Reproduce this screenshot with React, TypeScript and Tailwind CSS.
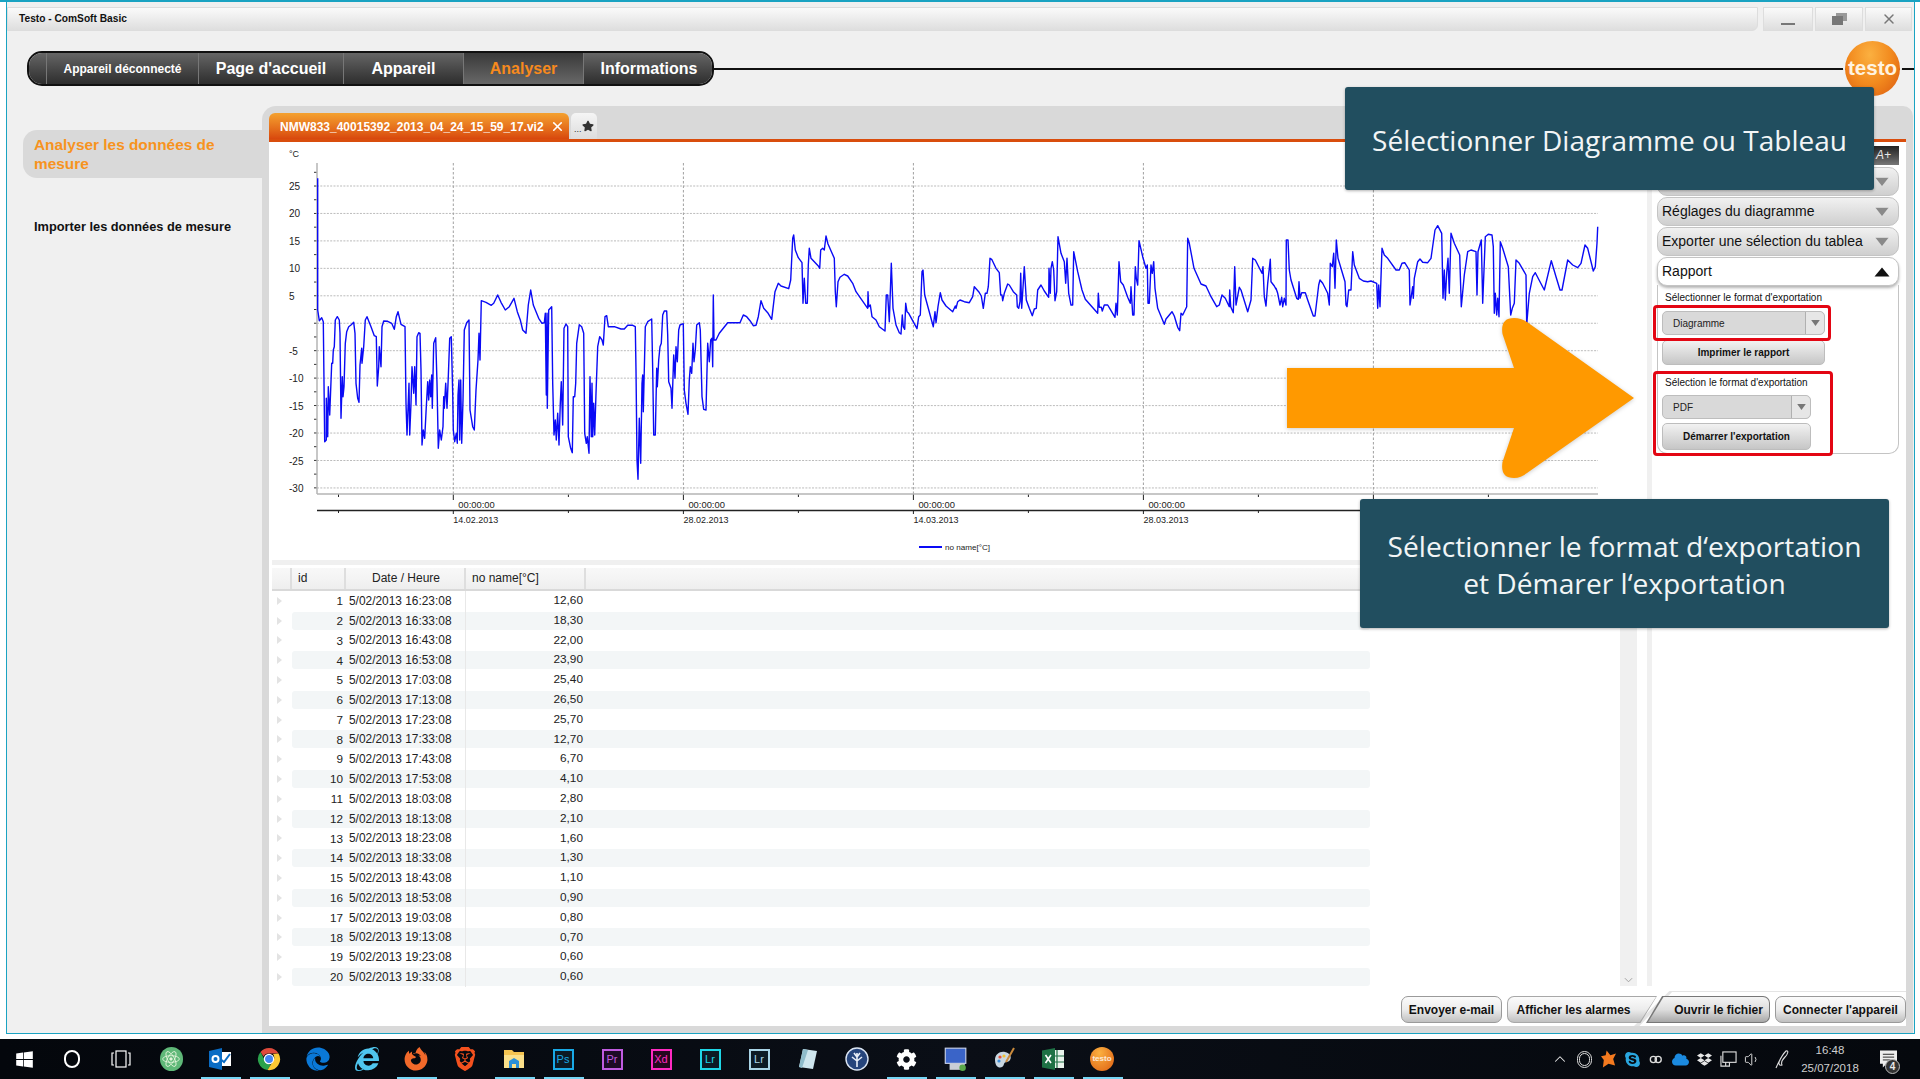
import { ChevronUp, Volume1, X } from "lucide-react";
import { FaWindows, FaEdge, FaInternetExplorer, FaFirefoxBrowser, FaCog, FaSkype, FaDropbox, FaCloud, FaStar } from "react-icons/fa";
import { SiBrave } from "react-icons/si";

// traced from the reference, 3x coordinates relative to each crop
const seg = (ox: number, oy: number, s: string) =>
  s
    .trim()
    .split(/\s+/)
    .map((p) => {
      const [x, y] = p.split(",").map(Number);
      return `${(ox + x / 3).toFixed(1)},${(oy + y / 3).toFixed(1)}`;
    })
    .join(" ");

const trace = [
  seg(316, 170, "5,25 5,420 10,452 17,443 22,455 26,815 31,810 31,685 35,800 37,650 41,735 47,580 50,580 52,540 55,530 58,450 64,440 70,450 72,490 75,745 79,620 81,680 84,650 88,520 92,485 98,470 105,465 113,457 117,490 120,640 125,685 129,697 132,585 137,535 138,580 143,530 148,450 153,440 165,470 175,497 181,500 184,648 188,590 190,530 195,590 198,470 203,453 215,454 227,460 235,478 241,440 246,425 255,463 267,470 270,700 273,795 279,640 281,795 285,700 288,590 293,670 296,590 300,705 303,500 308,488 312,490 315,600 318,825 322,780 326,805 331,710 335,635 338,690 341,630 344,680 347,615 349,715 353,520 359,503 363,640 367,835 371,780 376,810 381,770 383,680 385,715 389,640 393,715 397,620 401,505 406,500 410,670 412,780 416,815 421,790 424,820 426,675 429,630 431,810 434,630 437,820 441,690 445,480 452,458 459,450 462,720 470,770 475,780 480,660 486,570 489,490 492,570 496,392 510,397 526,406 533,400 545,375 555,397 568,420 580,410 594,385 604,425 613,450 620,480 630,490 637,405 644,360 652,405 668,445 678,460 685,458 688,430 691,675 693,430 694,715 698,420 707,410 710,640 714,795 718,750 721,810 725,730 729,825 733,700 736,635 740,765 744,475 750,462 755,470 757,800 764,835 769,848 772,680 776,680 779,640 782,520 790,464 797,470 803,490 806,790 811,820 814,800 819,850 822,620 826,800 828,640 830,800 833,700 836,795 840,670 845,530 851,500 858,510 862,525 867,440 872,437 877,470 895,470 915,477 925,477 935,466 950,466 958,470"),
  seg(636, 170, "0,600 3,870 6,928 10,745 14,880 18,640 20,615 22,725 25,600 28,470 35,455 47,447 50,600 53,795 58,795 62,595 64,650 68,570 72,530 76,520 80,435 85,423 92,423 95,495 98,635 105,655 108,715 113,555 117,625 120,530 124,575 128,480 132,465 142,461 145,660 150,700 156,733 160,630 163,590 167,610 171,520 174,575 178,540 182,465 190,458 193,480 198,680 203,718 210,720 215,520 220,575 224,510 228,505 230,590 232,375 234,510 240,510 250,490 262,475 275,458 312,458 322,435 332,440 342,452 352,467 360,466 367,440 375,392 383,415 395,428 407,448 417,365 427,340 435,348 458,356 464,330 470,205 473,195 478,240 487,263 498,278 501,400 505,325 509,400 514,400 517,285 520,235 525,265 547,288 551,295 554,240 560,235 565,240 570,198 576,222 595,265 598,365 601,410 606,335 612,322 625,313 635,318 650,340 660,365 695,415 696,365 698,410 703,405 708,440 720,450 730,470 747,483 751,375 755,375 760,455 766,280 771,415 780,465 790,488 795,492 799,435 802,470 806,478 809,400 813,425 818,430 843,476 848,440 853,435 858,305 861,300 866,375 892,470 897,425 900,458 906,410 913,368 918,390 930,408 950,425 958,408"),
  seg(956, 210, "0,295 5,275 12,270 25,275 40,278 50,260 55,230 68,245 76,258 82,295 88,250 93,250 97,230 102,145 107,148 120,175 130,188 134,255 138,255 140,272 145,250 155,222 160,225 172,245 182,255 184,290 188,295 192,275 194,190 197,295 205,170 211,270 220,295 229,317 235,297 241,295 245,240 255,225 265,243 278,262 279,175 283,250 285,175 289,155 293,180 297,272 302,245 306,80 315,130 325,155 329,220 333,145 338,250 345,285 350,285 353,125 365,185 378,240 388,268 425,310 427,250 430,292 436,292 439,303 445,285 455,285 463,298 477,322 480,280 484,315 489,155 494,215 502,225 515,262 523,280 525,230 530,315 534,315 538,170 541,205 545,225 549,92 560,140 570,175 574,165 576,280 580,280 585,165 589,190 593,155 597,235 605,295 625,343 630,327 648,305 655,318 665,352 671,362 675,310 680,315 685,305 692,290 695,85 700,100 714,175 735,222 750,228 765,260 782,290 790,285 798,255 808,265 820,290 821,240 824,290 832,308 836,170 840,285 850,232 855,240 875,305 885,270 890,145 898,150 918,190 921,170 925,260 930,288 935,220 943,148 945,215 955,228 960,238"),
  seg(1276, 210, "0,235 5,250 12,285 17,262 20,290 25,265 30,285 31,90 36,90 40,180 45,210 62,265 67,268 69,215 72,265 77,248 88,248 95,270 112,318 117,318 128,225 132,210 140,220 155,250 160,285 163,160 169,170 173,130 177,235 181,90 186,145 207,215 210,285 213,290 218,240 225,240 230,125 235,165 250,205 262,213 275,215 285,213 302,220 305,295 308,225 312,290 318,115 325,135 335,145 360,180 370,180 378,160 386,158 400,180 402,285 410,230 412,265 415,205 425,155 432,147 440,157 455,158 465,145 477,60 485,47 497,70 501,265 505,180 508,270 512,190 516,145 520,250 525,70 535,100 551,135 556,290 565,195 575,125 585,120 600,125 603,255 606,125 616,90 620,280 628,80 637,73 648,75 652,110 655,310 658,250 662,315 665,265 669,320 673,95 680,115 697,170 704,315 709,295 715,280 720,150 730,160 750,195 752,345 760,250 770,200 778,188 805,240 826,152 840,200 852,240 858,240 875,150 890,165 905,173 915,160 927,105 935,115 952,183 958,170 963,100 965,50"),
].join(" ");

const yTicks = [25, 20, 15, 10, 5, 0, -5, -10, -15, -20, -25, -30];
const yPos = (i: number) => 186 + i * 27.45;
const majors = [
  { x: 453.3, d: "14.02.2013" },
  { x: 683.4, d: "28.02.2013" },
  { x: 913.4, d: "14.03.2013" },
  { x: 1143.4, d: "28.03.2013" },
  { x: 1373.4, d: "" },
];
const minors = [338.5, 568.4, 798.4, 1028.4, 1258.4, 1488.4];

function Chart() {
  return (
    <svg viewBox="269 142 1378 418" className="block w-[1378px] h-[418px] shrink-0" fontFamily="'Liberation Sans', Arial, sans-serif">
      {yTicks.map((t, i) => (
        <g key={t}>
          <line x1="317" x2="1598" y1={yPos(i)} y2={yPos(i)} stroke="#bbbbbb" strokeWidth="1" strokeDasharray="2 1.3" />
          {t !== 0 && (
            <text x="289" y={yPos(i) + 4} fontSize="10" fill="#222">
              {t}
            </text>
          )}
        </g>
      ))}
      {Array.from({ length: 24 }).map((_, i) => (
        <line key={i} x1="314" x2="317" y1={172.3 + i * 13.72} y2={172.3 + i * 13.72} stroke="#333" strokeWidth="1" />
      ))}
      <text x="289" y="157" fontSize="9" fill="#222">
        °C
      </text>
      {majors.map((m) => (
        <g key={m.x}>
          <line x1={m.x} x2={m.x} y1="163" y2="494" stroke="#a0a0a0" strokeWidth="1" strokeDasharray="2.5 2" />
          <line x1={m.x} x2={m.x} y1="494" y2="500" stroke="#222" strokeWidth="1" />
          <line x1={m.x} x2={m.x} y1="510" y2="514" stroke="#222" strokeWidth="1" />
          <text x={m.x + 5} y="508" fontSize="9.4" fill="#222">
            00:00:00
          </text>
          <text x={m.x} y="523" fontSize="9" fill="#222">
            {m.d}
          </text>
        </g>
      ))}
      {minors.map((x) => (
        <g key={x}>
          <line x1={x} x2={x} y1="494" y2="497" stroke="#222" strokeWidth="1" />
          <line x1={x} x2={x} y1="510" y2="513" stroke="#222" strokeWidth="1" />
        </g>
      ))}
      <line x1="317" x2="317" y1="163" y2="494" stroke="#b4b4b4" strokeWidth="1.5" />
      <line x1="317" x2="1598" y1="494" y2="494" stroke="#b4b4b4" strokeWidth="1.5" />
      <line x1="317" x2="1598" y1="510.5" y2="510.5" stroke="#222" strokeWidth="1.6" />
      <polyline points={trace} fill="none" stroke="#0a0af5" strokeWidth="1.4" strokeLinejoin="round" />
      <line x1="919" x2="942" y1="547" y2="547" stroke="#0a0af5" strokeWidth="2" />
      <text x="945" y="550" fontSize="8.1" fill="#222">
        no name[°C]
      </text>
    </svg>
  );
}

const values = ["12,60", "18,30", "22,00", "23,90", "25,40", "26,50", "25,70", "12,70", "6,70", "4,10", "2,80", "2,10", "1,60", "1,30", "1,10", "0,90", "0,80", "0,70", "0,60", "0,60"];
const times = ["16:23:08", "16:33:08", "16:43:08", "16:53:08", "17:03:08", "17:13:08", "17:23:08", "17:33:08", "17:43:08", "17:53:08", "18:03:08", "18:13:08", "18:23:08", "18:33:08", "18:43:08", "18:53:08", "19:03:08", "19:13:08", "19:23:08", "19:33:08"];

function DataTable() {
  return (
    <div className="flex-1 pt-[3px] min-w-0">
      <div className="flex h-[23px] border-b-2 border-[#d9d9d9] bg-linear-to-b from-[#f8f8f8] via-[#f4f4f4] to-[#eeeeee] ml-[3px] text-[12px] text-[#222] leading-[21px]">
        <div className="w-[20px] border-r-2 border-[#dedede]" />
        <div className="w-[54px] pl-[6px] border-r-2 border-[#dedede]">id</div>
        <div className="w-[120px] pl-[2px] text-center border-r-2 border-[#dedede]">Date / Heure</div>
        <div className="w-[120px] pl-[6px] border-r-2 border-[#dedede]">no name[°C]</div>
      </div>
      {values.map((v, i) => (
        <div key={i} className="flex items-center h-[19.8px]">
          <div className="w-[23px] flex justify-center pr-[3px]">
            <div className="w-0 h-0 border-y-[4px] border-y-transparent border-l-[5px] border-l-[#e3e3e3]" />
          </div>
          <div className={`flex items-center w-[1078px] h-[18px] rounded-[3px] ${i % 2 === 1 ? "bg-[#f3f6f7]" : ""}`}>
            <div className="w-[51px] text-right text-[11.7px] text-[#222]">{i + 1}</div>
            <div className="w-[123px] pl-[6px] text-[11.9px] text-[#222] h-[20px] leading-[20px] border-r border-[#e8e8e8] whitespace-nowrap">5/02/2013 {times[i]}</div>
            <div className="w-[117px] text-right text-[11.8px] text-[#222]">{v}</div>
          </div>
        </div>
      ))}
    </div>
  );
}

function Tri({ up }: { up?: boolean }) {
  return (
    <svg viewBox="0 0 16 10" className="w-[16px] h-[10px]">
      {up ? <path d="M8 0.5 15.5 9.5 H0.5Z" fill="#111" /> : <path d="M1 0.5 H15 L8 9.5Z" fill="#8a8a8a" stroke="#fff" strokeWidth="0.4" />}
    </svg>
  );
}

function Accordion({ label, open }: { label: string; open?: boolean }) {
  return (
    <div
      className={`flex items-center justify-between h-[29px] pl-[4px] pr-[8px] rounded-[10px] border border-[#c4c4c4] text-[14px] text-[#111] whitespace-nowrap ${
        open ? "bg-white shadow-[0_2px_3px_rgba(0,0,0,0.3)]" : "bg-linear-to-b from-[#f1f1f1] to-[#cfcfcf]"
      }`}
    >
      <span>{label}</span>
      <Tri up={open} />
    </div>
  );
}

function Combo({ label, w }: { label: string; w: string }) {
  return (
    <div className={`flex items-center h-[24px] rounded-[5px] border border-[#bdbdbd] bg-[#d9d9d9] ${w}`}>
      <span className="flex-1 pl-[10px] text-[10px] text-[#222]">{label}</span>
      <span className="w-[19px] h-full flex items-center justify-center border-l border-[#b0b0b0] bg-[#e6e6e6] rounded-r-[5px]">
        <svg viewBox="0 0 10 7" className="w-[9px] h-[6px]">
          <path d="M0 0H10L5 7Z" fill="#777" />
        </svg>
      </span>
    </div>
  );
}

function ReportPanel() {
  return (
    <div className="h-[169px] -mt-[1px] pl-[4px] border border-t-0 border-[#c4c4c4] rounded-b-[10px] text-[#111]">
      <div className="pl-[3px] pt-[5px] h-[26px] text-[10px] leading-[16px]">Sélectionner le format d'exportation</div>
      <Combo label="Diagramme" w="w-[163px]" />
      <button className="block w-[163px] h-[25px] mt-[5px] rounded-[5px] border border-[#bdbdbd] bg-linear-to-b from-[#f2f2f2] to-[#c6c6c6] text-[10px] font-bold">Imprimer le rapport</button>
      <div className="pl-[3px] pt-[10px] h-[30px] text-[10px] leading-[16px]">Sélection le format d'exportation</div>
      <Combo label="PDF" w="w-[149px]" />
      <button className="block w-[149px] h-[27px] mt-[4px] rounded-[5px] border border-[#bdbdbd] bg-linear-to-b from-[#f2f2f2] to-[#c6c6c6] text-[10px] font-bold">Démarrer l'exportation</button>
    </div>
  );
}

const btn = "h-[27px] flex items-center justify-center text-[12px] font-bold text-[#111] whitespace-nowrap";
const btnSkin = "rounded-[7px] border border-[#9a9a9a] bg-linear-to-b from-[#fbfbfb] via-[#ececec] to-[#c0c0c0]";

function BottomButtons() {
  return (
    <div className="relative flex justify-end items-start pt-[10px] h-[40px]">
      <div className="absolute right-0 bottom-0 w-[272px] h-[35px] bg-[#e4e4e4] [clip-path:polygon(0_100%,13%_0,100%_0,100%_3%,14%_3%,2%_100%)]" />
      <div className={`${btn} ${btnSkin} w-[101px] mr-[5px]`}>Envoyer e-mail</div>
      <div className="relative w-[150px] h-[27px] p-[1px] -mr-[11px] rounded-l-[7px] bg-[#a8a8a8] [clip-path:polygon(0_0,100%_0,89%_100%,0_100%)]">
        <div className={`${btn} h-full pr-[17px] rounded-l-[6px] bg-linear-to-b from-[#fbfbfb] via-[#ececec] to-[#c0c0c0] [clip-path:polygon(0_0,100%_0,89%_100%,0_100%)]`}>Afficher les alarmes</div>
      </div>
      <div className="relative w-[124px] h-[27px] p-[1px] mr-[5px] rounded-r-[7px] bg-[#777777] [clip-path:polygon(13%_0,100%_0,100%_100%,0_100%)]">
        <div className={`${btn} h-full pl-[21px] rounded-r-[6px] bg-linear-to-b from-[#f4f4f4] via-[#dedede] to-[#a8a8a8] [clip-path:polygon(13.5%_0,100%_0,100%_100%,1%_100%)]`}>Ouvrir le fichier</div>
      </div>
      <div className={`${btn} ${btnSkin} w-[131px]`}>Connecter l'appareil</div>
    </div>
  );
}

function Underlined({ active, children }: { active?: boolean; children: React.ReactNode }) {
  return (
    <div className="relative w-[49px] h-[40px] flex items-center justify-center">
      {children}
      {active && <div className="absolute bottom-0 left-[5px] w-[40px] h-[2px] bg-[#76d6f5]" />}
    </div>
  );
}

function Adobe({ t, c }: { t: string; c: string }) {
  return <div className={`w-[21px] h-[21px] border-2 bg-[#0c1a24] flex items-center justify-center text-[11px] leading-none ${c}`}>{t}</div>;
}

function Taskbar() {
  return (
    <div className="flex items-center h-[40px] bg-linear-to-r from-[#04070c] via-[#0a0e16] to-[#05080d] text-white font-['Liberation_Sans',Arial,sans-serif]">
      <div className="w-[48px] flex justify-center">
        <FaWindows size={19} />
      </div>
      <div className="w-[48px] flex justify-center">
        <div className="w-[16px] h-[18px] rounded-full border-2 border-white" />
      </div>
      <div className="w-[50.5px] flex justify-center">
        <svg viewBox="0 0 20 18" className="w-[20px] h-[18px]" fill="none" stroke="#fff" strokeWidth="1.2">
          <rect x="5" y="1" width="10" height="16" />
          <path d="M3 3H1V15H3M17 3H19V15H17" />
        </svg>
      </div>
      <Underlined>
        <div className="w-[23px] h-[24px] rounded-full bg-[#5fb878] flex items-center justify-center">
          <svg viewBox="0 0 24 24" className="w-[20px] h-[20px]" fill="none" stroke="#e5f5dc" strokeWidth="1">
            <ellipse cx="12" cy="12" rx="10" ry="4" />
            <ellipse cx="12" cy="12" rx="10" ry="4" transform="rotate(60 12 12)" />
            <ellipse cx="12" cy="12" rx="10" ry="4" transform="rotate(120 12 12)" />
            <circle cx="12" cy="12" r="1.5" fill="#e5f5dc" />
          </svg>
        </div>
      </Underlined>
      <Underlined active>
        <svg viewBox="0 0 24 24" className="w-[24px] h-[24px]">
          <rect x="9" y="5" width="14" height="14" fill="#fff" />
          <path d="M11 11 L16 15 L22 7" fill="none" stroke="#0a6cc4" strokeWidth="2" />
          <path d="M1 4 L14 1 V23 L1 20Z" fill="#0a6cc4" />
          <circle cx="7.5" cy="12" r="3" fill="none" stroke="#fff" strokeWidth="2" />
        </svg>
      </Underlined>
      <Underlined active>
        <svg viewBox="0 0 24 24" className="w-[24px] h-[24px]">
          <path d="M12 1 A11 11 0 0 1 21.5 6.5 H12 A5.5 5.5 0 0 0 6.5 9.5 L3.5 5 A11 11 0 0 1 12 1Z" fill="#de4a3c" />
          <path d="M3.5 5 L8.5 14.5 A6 6 0 0 0 14 17.5 L10.5 23 A11 11 0 0 1 3.5 5Z" fill="#2ba24c" />
          <path d="M21.5 6.5 A11 11 0 0 1 10.5 23 L15.5 15 A6 6 0 0 0 16 7Z" fill="#fcc934" />
          <circle cx="12" cy="12" r="4.6" fill="#4285f4" stroke="#fff" strokeWidth="1.2" />
        </svg>
      </Underlined>
      <Underlined>
        <FaEdge size={24} className="text-[#0a78d7]" />
      </Underlined>
      <Underlined>
        <FaInternetExplorer size={24} className="text-[#4fc6ef]" />
      </Underlined>
      <Underlined active>
        <FaFirefoxBrowser size={24} className="text-[#f2692a]" />
      </Underlined>
      <Underlined>
        <SiBrave size={24} className="text-[#f4511e]" />
      </Underlined>
      <Underlined active>
        <svg viewBox="0 0 24 24" className="w-[24px] h-[24px]">
          <path d="M2 3H10L12 5H22V21H2Z" fill="#f5c451" />
          <rect x="2" y="8" width="20" height="13" fill="#fbe08a" />
          <path d="M7 21V14L12 11L17 14V21H14V17H10V21Z" fill="#2b8fd8" />
        </svg>
      </Underlined>
      <Underlined active>
        <Adobe t="Ps" c="border-[#19a9e6] text-[#19a9e6]" />
      </Underlined>
      <Underlined>
        <Adobe t="Pr" c="border-[#c05ce0] text-[#c05ce0] bg-[#1d0b26]" />
      </Underlined>
      <Underlined>
        <Adobe t="Xd" c="border-[#ff2bc2] text-[#ff2bc2] bg-[#26071f]" />
      </Underlined>
      <Underlined>
        <Adobe t="Lr" c="border-[#1fd6e6] text-[#1fd6e6]" />
      </Underlined>
      <Underlined>
        <Adobe t="Lr" c="border-[#a9d4e6] text-[#a9d4e6]" />
      </Underlined>
      <Underlined>
        <svg viewBox="0 0 24 24" className="w-[24px] h-[24px]">
          <path d="M7 2 L21 4 L17 22 L3 20Z" fill="#cfe6ee" />
          <path d="M7 2 L12 3 L6 21 L3 20Z" fill="#8fbccb" />
        </svg>
      </Underlined>
      <Underlined>
        <svg viewBox="0 0 24 24" className="w-[24px] h-[24px]" fill="none">
          <circle cx="12" cy="12" r="11" fill="#26457c" stroke="#dbe5f3" strokeWidth="1.4" />
          <path d="M12 20V6M12 14L7 10M12 14L17 10M12 10L9 6M12 10L15 6" stroke="#e8eef8" strokeWidth="1.6" />
        </svg>
      </Underlined>
      <Underlined active>
        <FaCog size={21} />
      </Underlined>
      <Underlined active>
        <svg viewBox="0 0 24 24" className="w-[26px] h-[26px]">
          <rect x="3" y="2" width="19" height="14" fill="#3a64c8" stroke="#cfd8ee" strokeWidth="1" />
          <rect x="7" y="16" width="14" height="6" fill="#c9ced6" />
          <circle cx="19" cy="20" r="3" fill="#5aa84a" />
        </svg>
      </Underlined>
      <Underlined active>
        <svg viewBox="0 0 24 24" className="w-[24px] h-[24px]">
          <path d="M3 13C3 7 8 4 13 5C18 6 20 10 18 13C16 16 13 14 12 17C11 21 8 21 6 20C4 19 3 16 3 13Z" fill="#c9d7e2" />
          <circle cx="8" cy="10" r="1.6" fill="#e6523c" />
          <circle cx="12" cy="9" r="1.6" fill="#f2c230" />
          <circle cx="7" cy="14" r="1.6" fill="#3f8fd8" />
          <path d="M14 15 L22 1" stroke="#c98a3c" strokeWidth="2" />
        </svg>
      </Underlined>
      <Underlined active>
        <svg viewBox="0 0 24 24" className="w-[24px] h-[24px]">
          <rect x="10" y="3" width="13" height="18" fill="#e9f3ec" />
          <path d="M10 9H23M10 15H23M16 3V21" stroke="#1e7145" strokeWidth="1.2" />
          <path d="M1 3.5 L14 1 V23 L1 20.5Z" fill="#1e7145" />
          <path d="M4.5 8 L10 16M10 8 L4.5 16" stroke="#fff" strokeWidth="1.6" />
        </svg>
      </Underlined>
      <Underlined active>
        <div className="w-[24px] h-[24px] rounded-full bg-radial-[at_40%_25%] from-[#fbb040] to-[#dd5f12] flex items-center justify-center text-[8px] font-bold text-white/80">testo</div>
      </Underlined>
      <div className="flex-1" />
      <div className="flex items-center h-[40px] pr-[14px] text-[#e8e8e8]">
        {[
          <ChevronUp key="a" size={18} strokeWidth={1.4} />,
          <div key="b" className="w-[15px] h-[17px] rounded-full border-[3px] border-double border-[#ddd]" />,
          <svg key="c" viewBox="0 0 16 18" className="w-[15px] h-[18px]">
            <path d="M6 0 L10 5 L16 3 L13 9 L15 16 L8 14 L2 18 L3 10 L0 6 L5 5Z" fill="#f47a1f" />
          </svg>,
          <FaSkype key="d" size={17} className="text-[#2aa7e0]" />,
          <svg key="e" viewBox="0 0 16 12" className="w-[14px] h-[11px]" fill="none" stroke="#ddd" strokeWidth="1.5">
            <circle cx="5" cy="6" r="3.5" />
            <circle cx="10.5" cy="6" r="3.5" />
          </svg>,
          <FaCloud key="f" size={17} className="text-[#1b8ae0]" />,
          <FaDropbox key="g" size={15} />,
          <svg key="h" viewBox="0 0 18 18" className="w-[17px] h-[17px]" fill="none" stroke="#ddd" strokeWidth="1.2">
            <rect x="3" y="1" width="14" height="11" />
            <path d="M1 5V16H6M10 12V16H6V12" />
          </svg>,
          <Volume1 key="i" size={17} strokeWidth={1.3} />,
        ].map((ic, i) => (
          <div key={i} className="w-[24px] flex justify-center">
            {ic}
          </div>
        ))}
        <div className="w-[10px]" />
        <svg viewBox="0 0 16 20" className="w-[16px] h-[20px] mr-[-4px]" fill="none" stroke="#ddd" strokeWidth="1.1">
          <path d="M2 19 C5 12 9 5 12 2 C15 1 14 5 11 8 C8 11 7 14 8 16 C5 17 4 14 6 11" />
        </svg>
        <div className="w-[80px] ml-[4px] text-center text-[#cfcfcf]">
          <div className="text-[11.5px] leading-[18px]">16:48</div>
          <div className="text-[11.5px] leading-[18px]">25/07/2018</div>
        </div>
        <div className="relative w-[36px] flex justify-center">
          <svg viewBox="0 0 18 18" className="w-[17px] h-[18px]">
            <path d="M0 0H18V14H7L3 18V14H0Z" fill="#eee" />
            <path d="M3 4H15M3 7H15M3 10H11" stroke="#222" strokeWidth="1" />
          </svg>
          <div className="absolute left-[15px] top-[9px] w-[15px] h-[15px] rounded-full bg-[#333] border border-[#bbb] text-[10px] leading-[13px] font-bold text-center">4</div>
        </div>
      </div>
    </div>
  );
}

const navItem = "flex items-center justify-center h-full border-r border-[#777] bg-linear-to-b from-[#666666] to-[#2e2e2e] text-white font-bold";

export default function App() {
  return (
    <div className="relative flex flex-col w-[1920px] h-[1079px] overflow-hidden bg-white border-t-2 border-[#1aa3c2] font-['Liberation_Sans',Arial,sans-serif]">
      <div className="ml-[6px] w-[1909px] h-[1032px] border-x border-b border-[#1aa3c2] bg-[#f0f0f0] shrink-0">
        {/* title bar */}
        <div className="flex pt-[5px] h-[29px]">
          <div className="w-[1751px] h-[24px] flex items-center pl-[11px] rounded-br-[6px] border border-[#dddddd] bg-linear-to-b from-[#fafafa] to-[#dedede] text-[10.2px] font-bold text-[#111]">Testo - ComSoft Basic</div>
          <div className="ml-[5px] w-[50px] h-[24px] flex items-end justify-center pb-[5px] border border-[#dddddd] bg-linear-to-b from-[#fafafa] to-[#dedede]">
            <div className="w-[14px] h-[2px] bg-[#777]" />
          </div>
          <div className="ml-[2px] w-[48px] h-[24px] flex items-center justify-center border border-[#dddddd] bg-linear-to-b from-[#fafafa] to-[#dedede]">
            <svg viewBox="0 0 16 12" className="w-[16px] h-[12px]">
              <rect x="5" y="0" width="11" height="8" fill="#999" />
              <rect x="1" y="3" width="11" height="9" fill="#777" />
            </svg>
          </div>
          <div className="ml-[2px] w-[47px] h-[24px] flex items-center justify-center border border-[#dddddd] bg-linear-to-b from-[#fafafa] to-[#dedede]">
            <X size={16} strokeWidth={2.2} className="text-[#777]" />
          </div>
        </div>
        {/* nav */}
        <div className="flex items-center mt-[20px] h-[35px] pl-[20px]">
          <div className="flex h-[35px] w-[687px] shrink-0 overflow-hidden rounded-[15px] border-2 border-[#111]">
            <div className={`${navItem} w-[18px]`} />
            <div className={`${navItem} w-[152px] text-[12px]`}>Appareil déconnecté</div>
            <div className={`${navItem} w-[145px] text-[16px]`}>Page d'accueil</div>
            <div className={`${navItem} w-[120px] text-[16px]`}>Appareil</div>
            <div className="flex items-center justify-center h-full w-[120px] border-r border-[#777] bg-linear-to-b from-[#3a3a3a] to-[#686868] text-[16px] font-bold text-[#f78a1d]">Analyser</div>
            <div className={`${navItem} flex-1 pl-[2px] text-[16px] border-r-0`}>Informations</div>
          </div>
          <div className="flex-1 h-[2px] bg-[#111]" />
        </div>
        {/* body */}
        <div className="flex mt-[20px] h-[927px]">
          <div className="w-[255px] shrink-0 pt-[24px] pl-[16px] relative">
            <div className="h-[48px] pl-[11px] pt-[5px] rounded-l-[14px] bg-[#d9d9d9] text-[15.4px] leading-[19px] font-bold text-[#f7931e]">
              <div className="w-[220px]">Analyser les données de mesure</div>
            </div>
            <div className="mt-[40px] pl-[11px] text-[12.8px] leading-[18px] font-bold text-[#111] whitespace-nowrap">Importer les données de mesure</div>
          </div>
          <div className="w-[1651px] p-[7px] rounded-tl-[14px] rounded-tr-[10px] bg-[#d9d9d9] flex flex-col">
            <div className="flex h-[26px] shrink-0">
              <div className="flex items-center justify-between w-[300px] pl-[11px] pr-[4px] pt-[1px] rounded-t-[6px] bg-linear-to-b from-[#f4a12f] to-[#d8470d] text-[12px] font-bold text-white whitespace-nowrap">
                <span>NMW833_40015392_2013_04_24_15_59_17.vi2</span>
                <X size={15} strokeWidth={2.6} />
              </div>
              <div className="flex items-end ml-[2px] w-[26px] pb-[5px] pl-[3px] rounded-t-[5px] bg-linear-to-b from-[#f5f5f5] to-[#dddddd] text-[9px] text-[#333]">
                <span className="leading-none">...</span>
                <FaStar size={12} className="text-[#333] mb-[2px]" />
              </div>
            </div>
            <div className="h-[3px] bg-[#d94d0d] shrink-0" />
            <div className="flex-1 bg-white flex flex-col min-h-0">
              <div className="flex h-[844px]">
                <div className="flex flex-col w-[1378px]">
                  <Chart />
                  <div className="ml-[3px] h-[5px] bg-[#f0f0f0] shrink-0" />
                  <div className="flex flex-1 min-h-0">
                    <DataTable />
                    <div className="w-[17px] mr-[10px] bg-[#f0f0f0] flex flex-col justify-end items-center pb-[3px]">
                      <svg viewBox="0 0 10 6" className="w-[9px] h-[6px]" fill="none" stroke="#999" strokeWidth="1">
                        <path d="M1 1L5 5L9 1" />
                      </svg>
                    </div>
                  </div>
                </div>
                <div className="w-[5px] bg-[#f0f0f0]" />
                <div className="flex-1 pl-[5px] pr-[7px]">
                  <div className="flex justify-end h-[25px] pt-[4px]">
                    <div className="w-[26px] h-[19px] pl-[3px] bg-linear-to-b from-[#222222] to-[#777777] text-[12px] italic text-[#e8e8e8] leading-[19px]">A+</div>
                  </div>
                  <Accordion label="" />
                  <div className="h-[1px]" />
                  <Accordion label="Réglages du diagramme" />
                  <div className="h-[1px]" />
                  <Accordion label="Exporter une sélection du tablea" />
                  <div className="h-[1px]" />
                  <Accordion label="Rapport" open />
                  <ReportPanel />
                </div>
              </div>
              <BottomButtons />
            </div>
          </div>
        </div>
      </div>
      <div className="h-[5px] shrink-0" />
      <Taskbar />

      {/* logo */}
      <div className="absolute left-[1845px] top-[39px] w-[55px] h-[55px] rounded-full ring-2 ring-[#f0f0f0] bg-radial-[at_45%_25%] from-[#fbb040] via-[#f28a1e] to-[#d9560f] flex items-center justify-center text-[20.5px] font-bold text-[#fff3e0]">testo</div>

      {/* annotations */}
      <div className="absolute left-[1345px] top-[85px] w-[529px] h-[103px] pt-[3px] rounded-[3px] bg-[#214e5f] shadow-[0_1px_3px_rgba(0,0,0,0.3)] flex items-center justify-center text-[28px] text-[#f2f5f6] font-['Open_Sans',sans-serif]">Sélectionner Diagramme ou Tableau</div>
      <div className="absolute left-[1360px] top-[497px] w-[529px] h-[129px] pt-[2px] rounded-[3px] bg-[#214e5f] shadow-[0_1px_3px_rgba(0,0,0,0.3)] flex flex-col items-center justify-center text-[28.2px] leading-[37px] text-[#f2f5f6] font-['Open_Sans',sans-serif]">
        <div>Sélectionner le format d‘exportation</div>
        <div>et Démarer l‘exportation</div>
      </div>
      <div className="absolute left-[1653px] top-[303px] w-[178px] h-[36px] rounded-[4px] border-[3px] border-[#e30613]" />
      <div className="absolute left-[1653px] top-[369px] w-[180px] h-[85px] rounded-[4px] border-[3px] border-[#e30613]" />
      <svg viewBox="1280 310 360 175" className="absolute left-[1280px] top-[308px] w-[360px] h-[175px] [filter:drop-shadow(0_1px_2px_rgba(0,0,0,0.2))]">
        <path d="M1287 368 H1514 L1502.5 334 Q1500 318 1514 318 Q1521 318 1527 322 L1634 398 L1527 473 Q1521 478 1514 478 Q1500 478 1502.5 462 L1514 428 H1287Z" fill="#ff9900" />
      </svg>
    </div>
  );
}
